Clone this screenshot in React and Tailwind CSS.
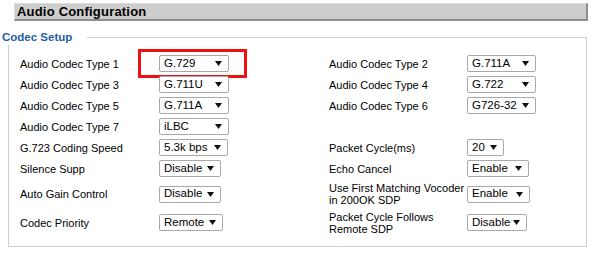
const rows = [
  { l: 'Audio Codec Type 1', lv: 'G.729', lw: 'w-[70px]', r: 'Audio Codec Type 2', rv: 'G.711A', rw: 'w-[69px]', h: 'h-[21px]', mark: true },
  { l: 'Audio Codec Type 3', lv: 'G.711U', lw: 'w-[70px]', r: 'Audio Codec Type 4', rv: 'G.722', rw: 'w-[69px]', h: 'h-[21px]' },
  { l: 'Audio Codec Type 5', lv: 'G.711A', lw: 'w-[70px]', r: 'Audio Codec Type 6', rv: 'G726-32', rw: 'w-[69px]', h: 'h-[21px]' },
  { l: 'Audio Codec Type 7', lv: 'iLBC', lw: 'w-[70px]', h: 'h-[21px]' },
  { l: 'G.723 Coding Speed', lv: '5.3k bps', lw: 'w-[69px]', r: 'Packet Cycle(ms)', rv: '20', rw: 'w-[37px]', h: 'h-[21px]' },
  { l: 'Silence Supp', lv: 'Disable', lw: 'w-[62px]', r: 'Echo Cancel', rv: 'Enable', rw: 'w-[62px]', h: 'h-[21px]' },
  { l: 'Auto Gain Control', lv: 'Disable', lw: 'w-[62px]', r: ['Use First Matching Vocoder', 'in 200OK SDP'], rv: 'Enable', rw: 'w-[63px]', h: 'h-[30px]' },
  { l: 'Codec Priority', lv: 'Remote', lw: 'w-[64px]', r: ['Packet Cycle Follows', 'Remote SDP'], rv: 'Disable', rw: 'w-[60px]', h: 'h-[27px]' },
];

function Select({ value, width }) {
  return (
    <div className={`flex h-[17px] ${width} items-center justify-between rounded-[2px] border border-[#a9a9a9] bg-white pl-[4px] pr-[6px] text-[11.5px] leading-none text-black`}>
      <span>{value}</span>
      <svg width="7" height="5" viewBox="0 0 7 5" className="shrink-0">
        <polygon points="0,0 7,0 3.5,5" fill="#111" />
      </svg>
    </div>
  );
}

function Label({ text }) {
  if (Array.isArray(text)) {
    return (
      <div className="text-[11px] leading-[12px] text-black">
        {text[0]}<br />{text[1]}
      </div>
    );
  }
  return <div className="text-[11px] leading-[14px] text-black">{text}</div>;
}

export default function App() {
  return (
    <div className="w-[596px] h-[257px] bg-white font-['Liberation_Sans',Arial,sans-serif] overflow-hidden">
      {/* Title bar */}
      <div className="mt-[3px] ml-[14px] flex h-[18px] w-[574px] items-center border-t border-l border-[#dcdcdc] border-b-2 border-r-2 border-b-[#8e8e8e] border-r-[#8e8e8e] bg-[#cdcdcd] pl-[2px]">
        <span className="text-[13px] font-bold tracking-[0.2px] text-black">Audio Configuration</span>
      </div>

      {/* Codec Setup group */}
      <div className="mt-[8px] ml-[8px] w-[579px]">
        <div className="flex h-[16px]">
          <div className="-ml-[6px] w-[85px] shrink-0 text-[11.5px] font-bold leading-[16px] text-[#1f5ea8]">
            Codec Setup
          </div>
          <div className="mt-[8px] h-[8px] flex-1 border-t border-r border-[#cfcfcf]" />
        </div>

        <div className="border-l border-r border-b border-[#cfcfcf] pt-[8px] pb-[10px] pl-[11px]">
          {rows.map((row, i) => (
            <div key={i} className={`grid grid-cols-[139px_170px_138px_1fr] items-center ${row.h}`}>
              <Label text={row.l} />
              <div className="relative">
                <Select value={row.lv} width={row.lw} />
                {row.mark && (
                  <span className="absolute -left-[21px] -top-[6px] h-[29px] w-[109px] border-[3px] border-[#ee1111]" />
                )}
              </div>
              {row.r ? <Label text={row.r} /> : <div />}
              {row.rv ? <Select value={row.rv} width={row.rw} /> : <div />}
            </div>
          ))}
        </div>
      </div>
    </div>
  );
}
